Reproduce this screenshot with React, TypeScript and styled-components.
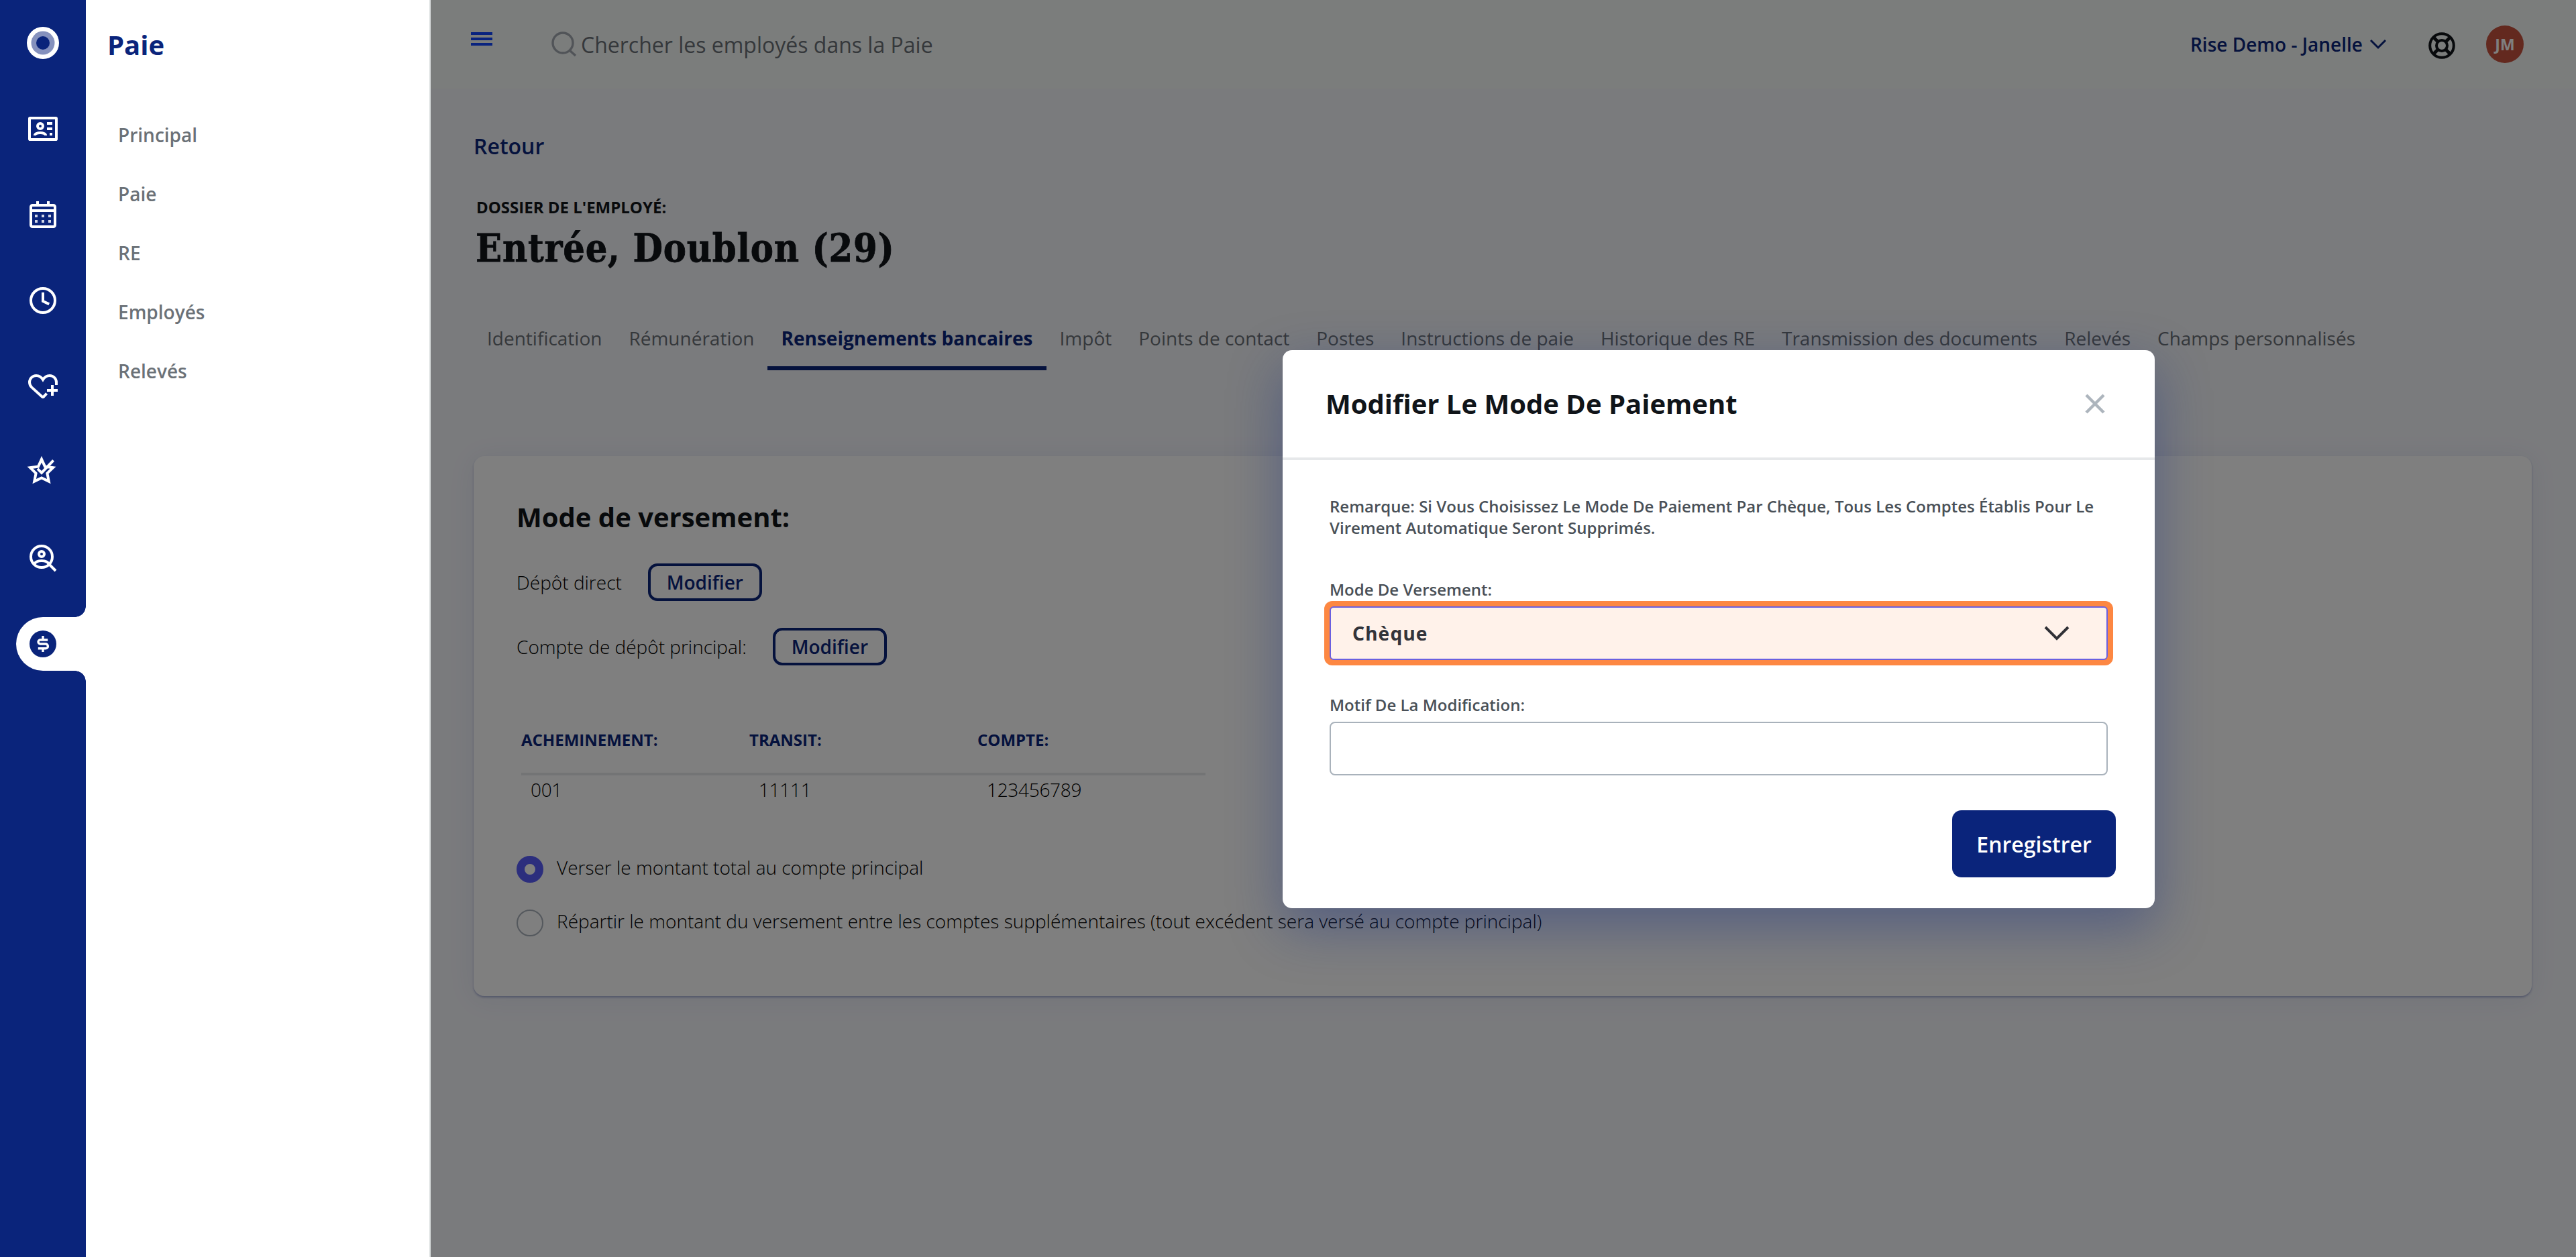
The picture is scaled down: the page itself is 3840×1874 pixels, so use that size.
import React, { useState } from 'react';
import styled, { createGlobalStyle } from 'styled-components';

const GlobalStyle = createGlobalStyle`
  * {
    box-sizing: border-box;
  }

  body {
    margin: 0;
    font-family: "Open Sans", "Noto Sans", sans-serif;
    font-size: 28px;
    color: #101419;
    background: #f5f6fb;
  }

  button, input {
    font-family: inherit;
  }
`;

const Layout = styled.div`
  display: flex;
  height: 1874px;
  overflow: hidden;
`;

/* Icon rail */

const Rail = styled.nav`
  width: 128px;
  background: #0a247b;
  display: flex;
  flex-direction: column;
`;

const RailItem = styled.div<{ $active?: boolean }>`
  height: 128px;
  display: flex;
  align-items: center;
  color: ${(p) => (p.$active ? '#0a247b' : '#fff')};
`;

const RailIcon = styled.svg`
  display: block;
  width: 48px;
  height: 48px;
  margin-left: 40px;
`;

const ActiveTab = styled.div`
  position: relative;
  width: 104px;
  height: 80px;
  margin-left: 24px;
  border-radius: 40px 0 0 40px;
  background: #fff;
  display: flex;
  align-items: center;

  ${RailIcon} {
    margin-left: 16px;
  }

  &::before,
  &::after {
    content: '';
    position: absolute;
    right: 0;
    width: 16px;
    height: 16px;
  }

  &::before {
    top: -16px;
    background: radial-gradient(circle at 0 0, #0a247b 15.5px, #fff 16px);
  }

  &::after {
    bottom: -16px;
    background: radial-gradient(circle at 0 100%, #0a247b 15.5px, #fff 16px);
  }
`;

/* Section menu */

const SidePanel = styled.aside`
  width: 514px;
  padding: 39px 0 0 32px;
  background: #fff;
  border-right: 2px solid #dde1e1;
`;

const SideTitle = styled.div`
  font-size: 40px;
  line-height: 56px;
  font-weight: 700;
  color: #0a247b;
`;

const SideList = styled.ul`
  list-style: none;
  margin: 62px 0 0;
  padding: 0 0 0 16px;
`;

const SideItem = styled.li`
  height: 88px;
  line-height: 88px;
  font-weight: 600;
  color: #6b7177;
`;

/* Main area */

const Main = styled.main`
  position: relative;
  flex: 1;
`;

const TopBar = styled.header`
  height: 132px;
  padding: 0 78px 0 60px;
  background: #f7faf9;
  display: flex;
  align-items: center;
`;

const MenuButton = styled.div`
  width: 32px;
  height: 20px;
  margin: 0 88px 16px 0;
  border-top: 4px solid #1246ff;
  border-bottom: 4px solid #1246ff;
  display: flex;
  flex-direction: column;
  justify-content: center;

  &::after {
    content: '';
    height: 4px;
    background: #1246ff;
  }
`;

const Search = styled.div`
  flex: 1;
  display: flex;
  align-items: center;
  gap: 6px;
  font-size: 32px;
  color: #6b7177;
`;

const Company = styled.div`
  display: flex;
  align-items: center;
  gap: 10px;
  font-weight: 600;
  color: #0a247b;
`;

const HelpIcon = styled.svg`
  width: 40px;
  height: 40px;
  margin: 4px 46px 0 62px;
`;

const Avatar = styled.div`
  width: 56px;
  height: 56px;
  border-radius: 50%;
  background: #c6523e;
  color: #fff;
  font-size: 23px;
  font-weight: 700;
  line-height: 56px;
  text-align: center;
`;

const Content = styled.div`
  padding: 64px 66px 0 64px;
`;

const BackLink = styled.a`
  display: block;
  font-size: 32px;
  line-height: 44px;
  font-weight: 600;
  color: #0a247b;
`;

const Overline = styled.div`
  margin: 53px 0 0 4px;
  font-size: 24px;
  line-height: 32px;
  font-weight: 700;
`;

const PageTitle = styled.h1`
  margin: 9px 0 0 3px;
  font-family: "Source Serif Pro", "DejaVu Serif Condensed", "DejaVu Serif", serif;
  font-stretch: condensed;
  font-size: 57px;
  line-height: 72px;
  font-weight: 700;
  letter-spacing: 0.8px;
  -webkit-text-stroke: 0.8px #101419;
`;

const Tabs = styled.div`
  display: flex;
  margin: 78px 0 0;
`;

const Tab = styled.div<{ $active?: boolean }>`
  padding: 0 20px 22px;
  line-height: 40px;
  white-space: nowrap;
  font-weight: ${(p) => (p.$active ? 700 : 400)};
  color: ${(p) => (p.$active ? '#0a247b' : '#6b7177')};
  border-bottom: 6px solid ${(p) => (p.$active ? '#0a247b' : 'transparent')};
`;

const Card = styled.section`
  margin-top: 128px;
  height: 805px;
  padding: 63px 64px 0;
  border-radius: 16px;
  background: #fff;
  box-shadow: 0 2px 3px rgba(40, 60, 150, 0.35), 0 4px 40px rgba(40, 60, 150, 0.08);
`;

const CardTitle = styled.h2`
  margin: 0 0 41px;
  font-size: 40px;
  line-height: 56px;
  font-weight: 700;
`;

const SettingRow = styled.div`
  display: flex;
  align-items: center;
  gap: 39px;
  height: 56px;
  margin-bottom: 40px;
  font-weight: 300;
  color: #000;
`;

const OutlineButton = styled.button`
  width: 170px;
  height: 56px;
  padding: 0;
  border: 4px solid #0a247b;
  border-radius: 14px;
  background: none;
  font-size: 28px;
  font-weight: 600;
  line-height: 40px;
  color: #0a247b;
`;

const AccountTable = styled.div`
  width: 1020px;
  margin: 95px 0 79px 7px;
`;

const HeadRow = styled.div`
  display: grid;
  grid-template-columns: repeat(3, 1fr);
  padding-bottom: 33px;
  border-bottom: 4px solid #e6e8ea;
  font-size: 24px;
  line-height: 32px;
  font-weight: 700;
  color: #0a247b;
`;

const ValueRow = styled.div`
  display: grid;
  grid-template-columns: repeat(3, 1fr);
  padding-top: 1px;
  line-height: 40px;
  font-weight: 300;
  letter-spacing: -0.3px;
  color: #000;

  span {
    padding-left: 14px;
  }
`;

const RadioRow = styled.label`
  display: flex;
  gap: 20px;
  height: 40px;
  margin-bottom: 40px;
  line-height: 34px;
  font-weight: 300;
  color: #000;
`;

const Radio = styled.span<{ $checked?: boolean }>`
  width: 40px;
  height: 40px;
  border-radius: 50%;
  background: #fff;
  border: ${(p) => (p.$checked ? '12px solid #585cfa' : '2px solid #a9b1bb')};
`;

/* Dialog */

const Overlay = styled.div`
  position: absolute;
  inset: 0;
  padding: 522px 0 0 1270px;
  background: rgba(0, 0, 0, 0.5);
`;

const Dialog = styled.div`
  width: 1300px;
  height: 832px;
  border-radius: 14px;
  background: #fff;
  box-shadow: 0 28px 80px rgba(20, 44, 130, 0.4);
`;

const DialogHeader = styled.div`
  display: flex;
  align-items: center;
  justify-content: space-between;
  height: 164px;
  padding: 0 73px 0 64px;
  border-bottom: 4px solid #e6e8ea;
`;

const DialogTitle = styled.h2`
  margin: 0;
  font-size: 40px;
  line-height: 56px;
  font-weight: 700;
`;

const DialogBody = styled.div`
  display: flex;
  flex-direction: column;
  padding: 53px 58px 0 62px;
`;

const Note = styled.p`
  margin: 0 0 60px 8px;
  font-size: 24px;
  line-height: 32px;
  font-weight: 600;
  color: #495057;
`;

const FieldLabel = styled.label`
  margin-left: 8px;
  font-size: 24px;
  line-height: 32px;
  font-weight: 600;
  color: #495057;
`;

const Highlight = styled.div`
  width: 1176px;
  height: 96px;
  margin: 1px 0 43px;
  border: 8px solid #fd8742;
  border-radius: 12px;
  background: #fd8742;
`;

const Select = styled.div`
  display: flex;
  align-items: center;
  justify-content: space-between;
  height: 80px;
  padding: 0 55px 0 32px;
  border: 2px solid #6a60e0;
  border-radius: 6px;
  background: #fff2ea;
  font-family: "Noto Sans", "Open Sans", sans-serif;
  font-weight: 700;
  letter-spacing: 1.2px;
  color: #33343a;
`;

const ReasonInput = styled.input`
  width: 1160px;
  height: 80px;
  margin: 9px 0 52px 8px;
  padding: 0 32px;
  border: 2px solid #a9b2bb;
  border-radius: 8px;
  background: #fff;
  font-size: 28px;
`;

const SaveButton = styled.button`
  align-self: flex-end;
  width: 244px;
  height: 100px;
  padding: 0;
  border: 0;
  border-radius: 14px;
  background: #0a247b;
  color: #fff;
  font-size: 32px;
  font-weight: 600;
`;

const stroke = { fill: 'none', stroke: 'currentColor', strokeWidth: 2 };

const LogoIcon = () => (
  <RailIcon viewBox="0 0 48 48">
    <circle cx="24" cy="24" r="24" fill="#fff" />
    <circle cx="24" cy="24" r="17.5" fill="#8591bd" />
    <circle cx="24" cy="24" r="10" fill="#0a247b" />
  </RailIcon>
);

const ProfileIcon = () => (
  <RailIcon viewBox="0 0 24 24" {...stroke}>
    <rect x="2" y="4" width="20" height="16" rx="0.4" />
    <circle cx="10" cy="10" r="2" />
    <path d="M6 17v-.2c0-1.1 1.8-1.8 4-1.8s4 .7 4 1.8v.2M15 8h4M15 12h4M17 16h2" />
  </RailIcon>
);

const CalendarIcon = () => (
  <RailIcon viewBox="0 0 24 24" {...stroke}>
    <rect x="3" y="5" width="18" height="16" rx="1.2" />
    <path d="M3 9h18M8 2v3M16 2v3" />
    <path d="M6 13h2m3 0h2m3 0h2M6 17h2m3 0h2m3 0h2" opacity="0.82" />
  </RailIcon>
);

const ClockIcon = () => (
  <RailIcon viewBox="0 0 24 24" {...stroke}>
    <circle cx="12" cy="12" r="9" />
    <path d="M12 6v6.5l4.6 2.2" />
  </RailIcon>
);

const HeartPlusIcon = () => (
  <RailIcon viewBox="0 0 24 24" {...stroke}>
    <path d="M22 11V9a5 5 0 0 0-5-5c-2 0-3.7 1-5 3-1.3-2-3-3-5-3a5 5 0 0 0-5 5c0 1.6.5 2.6 1.6 3.7L11.4 19.7q.6.5 1.2 0l2.2-2.4" />
    <path d="M15 15h8M19 11v8" />
  </RailIcon>
);

const StarCheckIcon = () => (
  <RailIcon viewBox="0 0 24 24" {...stroke}>
    <path d="M11 2.3l2.5 5.5 6 .8-4.3 4.2 1.2 6L11 16.2l-5.4 2.6 1.2-6-4.3-4.2 6-.8z" />
    <path d="M8 9.4l3 3 8.8-9.2" />
  </RailIcon>
);

const PersonSearchIcon = () => (
  <RailIcon viewBox="0 0 24 24" {...stroke}>
    <circle cx="11" cy="11" r="8" />
    <circle cx="11" cy="9" r="2" />
    <path d="M5.6 16.6C6.2 14.8 8.2 14 11 14s4.8.8 5.4 2.6M16.5 16.5l5 5" />
  </RailIcon>
);

const DollarIcon = () => (
  <RailIcon viewBox="0 0 24 24">
    <circle cx="12" cy="12" r="10" fill="#0a247b" />
    <path
      d="M15.6 9H10a1.5 1.5 0 0 0 0 3h4a1.5 1.5 0 0 1 0 3.4H8.4M12 6v2.6M12 15.4V18"
      fill="none"
      stroke="#fff"
      strokeWidth="1.7"
    />
  </RailIcon>
);

const railIcons = [
  LogoIcon,
  ProfileIcon,
  CalendarIcon,
  ClockIcon,
  HeartPlusIcon,
  StarCheckIcon,
  PersonSearchIcon,
];

const sections = ['Principal', 'Paie', 'RE', 'Employés', 'Relevés'];

const tabs = [
  'Identification',
  'Rémunération',
  'Renseignements bancaires',
  'Impôt',
  'Points de contact',
  'Postes',
  'Instructions de paie',
  'Historique des RE',
  'Transmission des documents',
  'Relevés',
  'Champs personnalisés',
];

const App: React.FC = () => {
  const [reason, setReason] = useState('');

  return (
    <Layout>
      <GlobalStyle />
      <Rail>
        {railIcons.map((Icon, i) => (
          <RailItem key={i}><Icon /></RailItem>
        ))}
        <RailItem $active>
          <ActiveTab><DollarIcon /></ActiveTab>
        </RailItem>
      </Rail>

      <SidePanel>
        <SideTitle>Paie</SideTitle>
        <SideList>
          {sections.map((name) => <SideItem key={name}>{name}</SideItem>)}
        </SideList>
      </SidePanel>

      <Main>
        <TopBar>
          <MenuButton />
          <Search>
            <svg width="38" height="38" viewBox="0 0 38 38" fill="none" stroke="#a2a8b0" strokeWidth="3.4">
              <circle cx="17" cy="17" r="15" />
              <path d="M27 28l9 8" />
            </svg>
            Chercher les employés dans la Paie
          </Search>
          <Company>
            Rise Demo - Janelle
            <svg width="26" height="16" viewBox="0 0 26 16" fill="none" stroke="#0a247b" strokeWidth="3">
              <path d="M2 2l11 11L24 2" />
            </svg>
          </Company>
          <HelpIcon viewBox="0 0 40 40" fill="none" stroke="#101419" strokeWidth="4">
            <circle cx="20" cy="20" r="17.8" />
            <circle cx="20" cy="20" r="8" />
            <path d="M7.5 7.5l7 7M25.5 25.5l7 7M32.5 7.5l-7 7M14.5 25.5l-7 7" strokeWidth="5" />
          </HelpIcon>
          <Avatar>JM</Avatar>
        </TopBar>

        <Content>
          <BackLink>Retour</BackLink>
          <Overline>DOSSIER DE L'EMPLOYÉ:</Overline>
          <PageTitle>Entrée, Doublon (29)</PageTitle>
          <Tabs>
            {tabs.map((name) => (
              <Tab key={name} $active={name === 'Renseignements bancaires'}>{name}</Tab>
            ))}
          </Tabs>

          <Card>
            <CardTitle>Mode de versement:</CardTitle>
            <SettingRow>
              <span>Dépôt direct</span>
              <OutlineButton>Modifier</OutlineButton>
            </SettingRow>
            <SettingRow>
              <span>Compte de dépôt principal:</span>
              <OutlineButton>Modifier</OutlineButton>
            </SettingRow>
            <AccountTable>
              <HeadRow>
                <span>ACHEMINEMENT:</span>
                <span>TRANSIT:</span>
                <span>COMPTE:</span>
              </HeadRow>
              <ValueRow>
                <span>001</span>
                <span>11111</span>
                <span>123456789</span>
              </ValueRow>
            </AccountTable>
            <RadioRow>
              <Radio $checked />
              Verser le montant total au compte principal
            </RadioRow>
            <RadioRow>
              <Radio />
              Répartir le montant du versement entre les comptes supplémentaires (tout excédent sera versé au compte principal)
            </RadioRow>
          </Card>
        </Content>

        <Overlay>
          <Dialog>
            <DialogHeader>
              <DialogTitle>Modifier Le Mode De Paiement</DialogTitle>
              <svg width="32" height="32" viewBox="0 0 32 32" fill="none" stroke="#adb5bd" strokeWidth="4.5">
                <path d="M3 3l26 26M29 3L3 29" />
              </svg>
            </DialogHeader>
            <DialogBody>
              <Note>
                Remarque: Si Vous Choisissez Le Mode De Paiement Par Chèque, Tous Les Comptes Établis Pour Le
                Virement Automatique Seront Supprimés.
              </Note>
              <FieldLabel>Mode De Versement:</FieldLabel>
              <Highlight>
                <Select>
                  Chèque
                  <svg width="38" height="24" viewBox="0 0 38 24" fill="none" stroke="#303136" strokeWidth="4">
                    <path d="M2 3l17 17L36 3" />
                  </svg>
                </Select>
              </Highlight>
              <FieldLabel>Motif De La Modification:</FieldLabel>
              <ReasonInput value={reason} onChange={(e) => setReason(e.target.value)} />
              <SaveButton>Enregistrer</SaveButton>
            </DialogBody>
          </Dialog>
        </Overlay>
      </Main>
    </Layout>
  );
};

export default App;
